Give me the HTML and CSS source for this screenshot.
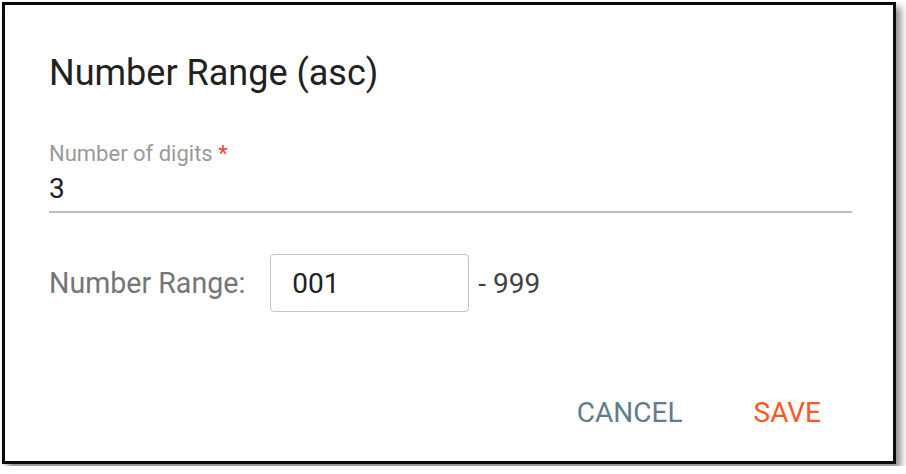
FILE: index.html
```html
<!DOCTYPE html>
<html lang="en">
<head>
<meta charset="UTF-8">
<meta name="viewport" content="width=device-width, initial-scale=1.0">
<title>Number Range</title>
<link rel="stylesheet" href="styles.css">
</head>
<body>
<div class="dialog">
  <h2 class="dialog-title">Number Range (asc)</h2>

  <div class="field">
    <label class="field-label" for="digits">Number of digits <span class="required">*</span></label>
    <input class="field-input" id="digits" type="text" value="3">
  </div>

  <div class="range-row">
    <span class="range-label">Number Range:</span>
    <input class="range-box" type="text" value="001">
    <span class="range-end">- 999</span>
  </div>

  <div class="actions">
    <button class="btn btn-cancel">Cancel</button>
    <button class="btn btn-save">Save</button>
  </div>
</div>
</body>
</html>
```

FILE: styles.css
```css
html, body {
  margin: 0;
  background-color: #fff;
  font-family: Roboto, "Noto Sans", sans-serif;
}

.dialog {
  margin: 2px;
  width: 894px;
  height: 462px;
  box-sizing: border-box;
  border: 3px solid #0a0a0a;
  background-color: #fff;
  box-shadow: 5px 5px 7px rgba(0, 0, 0, 0.45);
  padding: 47px 41px 0 44px;
  display: flex;
  flex-direction: column;
}

.dialog-title {
  margin: 0;
  font-size: 36px;
  font-weight: 400;
  line-height: 42px;
  color: #212121;
}

.field {
  margin-top: 47px;
  display: flex;
  flex-direction: column;
  border-bottom: 2px solid #bdbdbd;
  padding-bottom: 5px;
}

.field-label {
  font-size: 22px;
  line-height: 26px;
  color: #9a9a9a;
}

.required {
  color: #f44336;
}

.field-input {
  margin-top: 5px;
  border: none;
  outline: none;
  padding: 0;
  font-family: inherit;
  font-size: 28px;
  line-height: 34px;
  height: 34px;
  color: #212121;
  background: transparent;
}

.range-row {
  margin-top: 41px;
  display: flex;
  align-items: center;
}

.range-label {
  font-size: 28.6px;
  color: #757575;
  margin-right: 25px;
}

.range-box {
  width: 199px;
  height: 58px;
  box-sizing: border-box;
  border: 1.5px solid #c4c4c4;
  border-radius: 4px;
  padding: 0 0 0 21px;
  font-family: inherit;
  font-size: 28px;
  color: #212121;
  outline: none;
}

.range-end {
  margin-left: 9px;
  font-size: 28px;
  color: #424242;
}

.actions {
  margin-top: auto;
  display: flex;
  justify-content: flex-end;
  gap: 71px;
  padding: 0 31px 32px 0;
}

.btn {
  border: none;
  background: none;
  padding: 0;
  font-family: inherit;
  font-size: 28px;
  line-height: 32px;
  text-transform: uppercase;
  cursor: pointer;
}

.btn-cancel {
  color: #607d8b;
}

.btn-save {
  color: #ff5722;
}
```
